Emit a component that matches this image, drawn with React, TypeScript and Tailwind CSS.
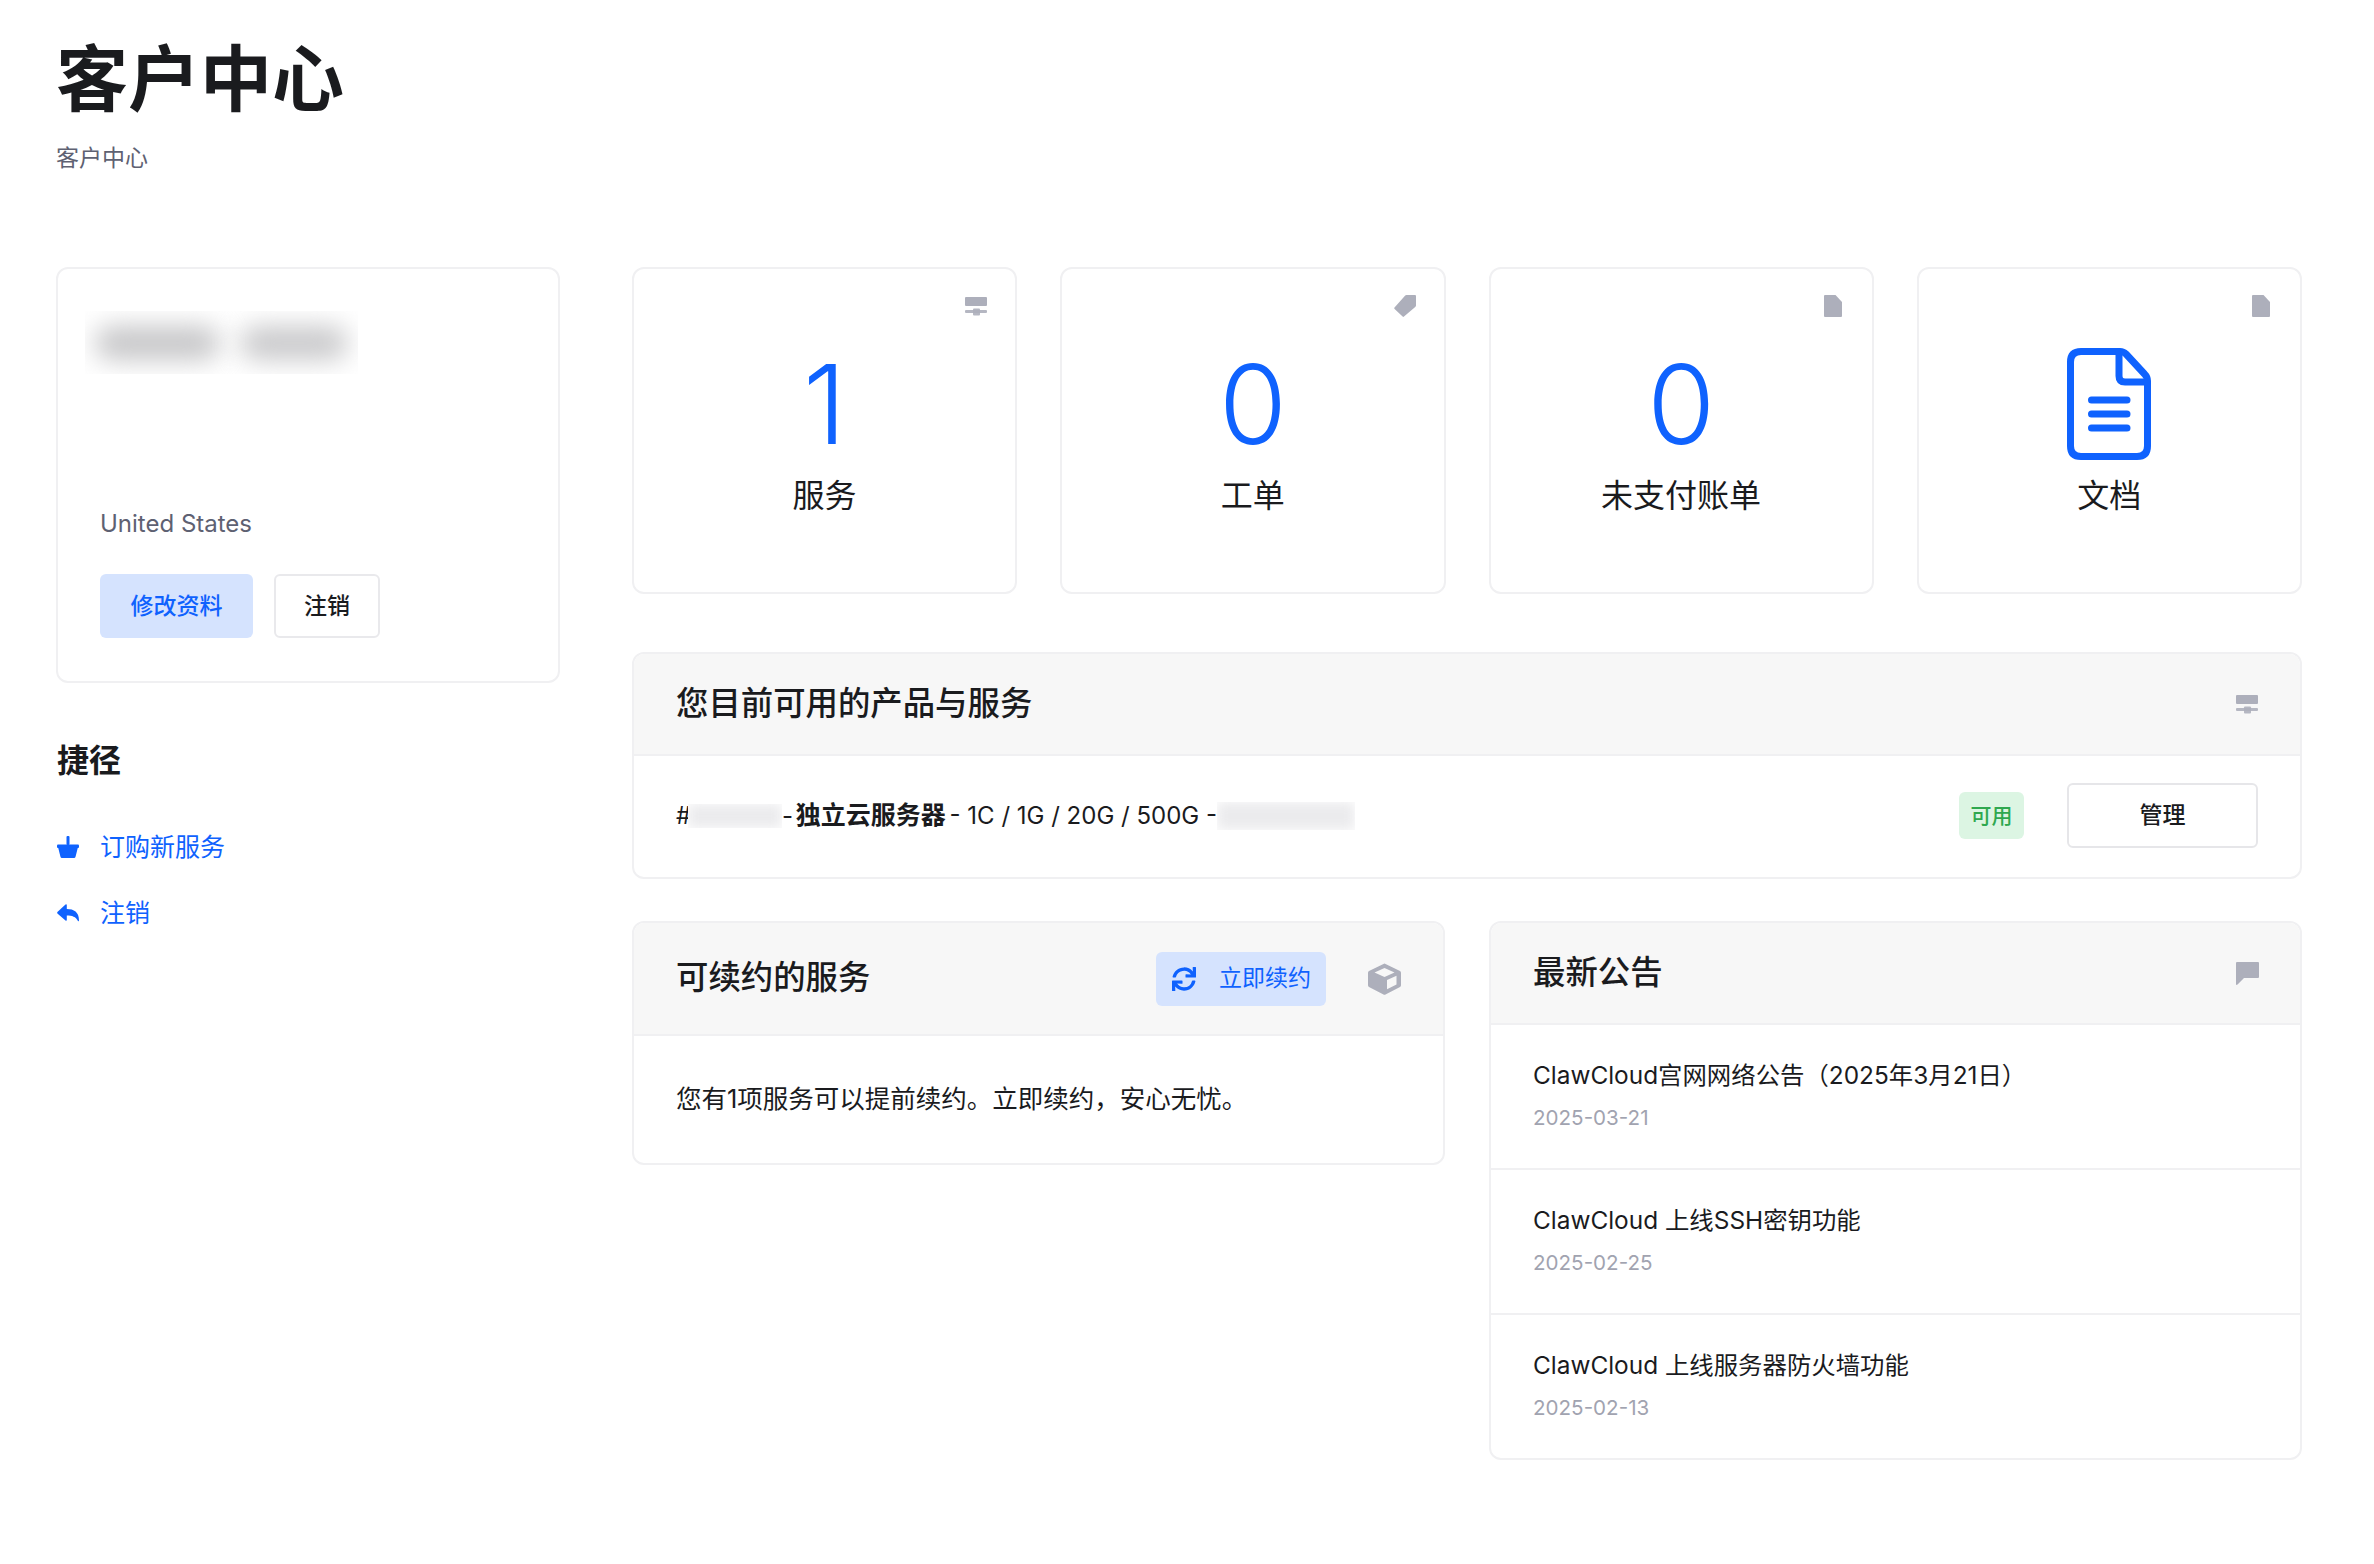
import React from "react";
import { FaSync } from "react-icons/fa";

const ServerIcon = ({ cls }: { cls: string }) => (
  <svg viewBox="0 0 22 19" className={cls} fill="#adafbb">
    <rect x="0" y="0" width="22" height="9" rx="1" />
    <rect x="0" y="13" width="22" height="3" rx="1" opacity="0.9" />
    <rect x="8" y="11.5" width="7" height="7" rx="1" opacity="0.9" />
  </svg>
);
const TagIcon = () => (
  <svg viewBox="0 0 22 22" className="w-[22px] h-[22px]" fill="#adafbb">
    <path d="M0.5 12.5 L11 0.8 Q11.5 0 12.5 0 L21 0 Q22 0 22 1 L22 10.5 Q22 11.3 21.2 12 L10 21.6 Q9.3 22.2 8.6 21.6 L0.6 14 Q0 13.3 0.5 12.5Z" />
  </svg>
);
const FileIcon = () => (
  <svg viewBox="0 0 18 22" className="w-[18px] h-[22px] mr-[2px]" fill="#adafbb">
    <path d="M1 0 H11.5 L18 7 V21 Q18 22 17 22 H1 Q0 22 0 21 V1 Q0 0 1 0Z" />
  </svg>
);
const CommentIcon = () => (
  <svg viewBox="0 0 23 23" className="w-[23px] h-[23px] -mr-[1px]" fill="#adafbb">
    <path d="M1 0 H22 Q23 0 23 1 V15 Q23 16 22 16 H8 L1.5 22.6 Q0 23.5 0 22 V1 Q0 0 1 0Z" />
  </svg>
);
const CubeIcon = () => (
  <svg viewBox="0 0 33 32" className="w-[33px] h-[32px]">
    <path d="M16.5 0.5 L32 8 Q33 8.6 33 9.8 V22.2 Q33 23.4 32 24 L17.5 31.4 Q16.5 32 15.5 31.4 L1 24 Q0 23.4 0 22.2 V9.8 Q0 8.6 1 8 Z" fill="#adafbb" />
    <path d="M16.5 5 L26.5 9.5 L16.5 14 L6.5 9.5 Z" fill="#f7f7f7" />
    <path d="M19 17 L28.5 12.8 V21.5 L19 26.2 Z" fill="#f7f7f7" />
  </svg>
);
const BasketIcon = () => (
  <svg viewBox="0 0 22 22" className="w-[22px] h-[22px] ml-[1px] mb-[2px]" fill="#0f62fe">
    <rect x="9.5" y="0" width="3" height="9" rx="1" />
    <rect x="0" y="8.5" width="22" height="3.5" rx="1" />
    <path d="M1 11 H21 L18.6 20.5 Q18.3 22 17 22 H5 Q3.7 22 3.4 20.5Z" />
  </svg>
);
const ReplyIcon = () => (
  <svg viewBox="0 0 22 18" className="w-[22px] h-[18px] ml-[1px] mb-[3px]" fill="#0f62fe">
    <path d="M0.4 8 L8.5 0.5 Q9.8 -0.2 9.8 1.2 V5 C17 5 22 8 22 16.500 Q21.800 18 20.800 16.800 C19 12.800 15 11.500 9.800 11.500 V15.800 Q9.800 17.200 8.500 16.500 L0.400 9.500 Q-0.100 8.800 0.400 8Z" />
  </svg>
);
const BigDocIcon = () => (
  <svg viewBox="0 0 84 112" className="w-[84px] h-[112px]" fill="none" stroke="#0f62fe" strokeWidth="7" strokeLinejoin="round" strokeLinecap="round">
    <path d="M14 3.5 H53 Q56.5 3.5 59 6 L77.5 26 Q80.5 29 80.5 33 V98 Q80.5 108.500 70 108.500 H14 Q3.5 108.500 3.5 98 V14 Q3.5 3.5 14 3.5Z" />
    <path d="M52 4 V28 Q52 34 58 34 H80" />
    <path d="M24.500 52 H60 M24.500 66 H60 M24.500 80 H60" />
  </svg>
);

const Blur = ({ cls }: { cls: string }) => (
  <span className={`block overflow-hidden bg-white shrink-0 ${cls}`}>
    <span className="block w-full h-full bg-[#ebebed] blur-[6px]" />
  </span>
);

const Stat = ({ icon, value, label }: { icon: React.ReactNode; value: React.ReactNode; label: string }) => (
  <div className="h-[327px] border-2 border-[#f0f0f2] rounded-[12px] pt-[26px] px-[28px]">
    <div className="flex justify-end h-[22px] items-start">{icon}</div>
    <div className="mt-[27px] h-[120px] flex items-center justify-center text-[110px] leading-none font-light text-[#0f62fe]">{value}</div>
    <div className="mt-[10px] h-[44px] leading-[44px] text-center text-[32px] text-[#1a1b1e]">{label}</div>
  </div>
);

const Panel = ({ title, right, h, children, cls }: { title: string; right: React.ReactNode; h: string; children: React.ReactNode; cls?: string }) => (
  <div className={`border-2 border-[#f0f0f2] rounded-[12px] overflow-hidden ${cls ?? ""}`}>
    <div className={`flex items-center justify-between pl-[42px] pr-[42px] bg-[#f7f7f7] border-b-2 border-[#f0f0f2] ${h}`}>
      <div className="text-[32.4px] font-medium text-[#1a1b1e]">{title}</div>
      {right}
    </div>
    {children}
  </div>
);

const News = ({ title, date, last }: { title: string; date: string; last?: boolean }) => (
  <div className={`pl-[42px] pt-[30px] ${last ? "h-[143px]" : "h-[145px] border-b-2 border-[#f0f0f2]"}`}>
    <div className="text-[24.4px] leading-[40px] text-[#1a1b1e]">{title}</div>
    <div className="mt-[3px] text-[20.6px] leading-[40px] text-[#a1a3b0]">{date}</div>
  </div>
);

export default function App() {
  return (
    <div className="w-[2374px] h-[1564px] bg-white pl-[56px] pr-[72px] pt-[29px] font-['Inter','Noto_Sans_CJK_SC',sans-serif] text-[#1a1b1e]">
      <h1 className="text-[72px] leading-[100px] font-semibold">客户中心</h1>
      <div className="mt-[13px] text-[23px] leading-[32px] text-[#5e6172]">客户中心</div>

      <div className="mt-[93px] flex gap-[72px] items-start">
        <aside className="w-[504px] shrink-0">
          <div className="h-[416px] border-2 border-[#f0f0f2] rounded-[12px] px-[42px] pt-[42px]">
            <div className="flex w-[273px] h-[63px] -ml-[15px] overflow-hidden">
              <span className="w-[145px] h-full flex items-center justify-center">
                <span className="block w-[125px] h-[34px] rounded-full bg-[#c6c6c8] blur-[13px]" />
              </span>
              <span className="w-[128px] h-full flex items-center justify-center">
                <span className="block w-[108px] h-[34px] rounded-full bg-[#c9c9cb] blur-[13px]" />
              </span>
            </div>
            <div className="mt-[133px] text-[24px] leading-[34px] text-[#5e6172]">United States</div>
            <div className="mt-[33px] flex gap-[21px]">
              <div className="w-[153px] h-[64px] rounded-[6px] bg-[#d5e3fe] text-[#0f62fe] text-[23px] font-medium flex items-center justify-center">修改资料</div>
              <div className="w-[106px] h-[64px] rounded-[6px] border-2 border-[#e9e9ec] text-[23px] font-medium flex items-center justify-center">注销</div>
            </div>
          </div>
          <div className="mt-[55px] ml-[1px] text-[32px] leading-[46px] font-semibold">捷径</div>
          <div className="mt-[42px] flex items-center gap-[21px] h-[44px] text-[25px] text-[#0f62fe]"><BasketIcon />订购新服务</div>
          <div className="mt-[22px] flex items-center gap-[21px] h-[44px] text-[25px] text-[#0f62fe]"><ReplyIcon />注销</div>
        </aside>

        <main className="w-[1670px]">
          <div className="grid grid-cols-4 gap-[43px]">
            <Stat icon={<ServerIcon cls="w-[22px] h-[19px] mt-[2px]" />} value="1" label="服务" />
            <Stat icon={<TagIcon />} value="0" label="工单" />
            <Stat icon={<FileIcon />} value="0" label="未支付账单" />
            <Stat icon={<FileIcon />} value={<BigDocIcon />} label="文档" />
          </div>

          <Panel cls="mt-[58px]" h="h-[102px]" title="您目前可用的产品与服务" right={<ServerIcon cls="w-[22px] h-[19px]" />}>
            <div className="h-[121px] pl-[42px] pr-[42px] pb-[2px] flex items-center">
              <div className="flex items-center text-[24px] text-[#1a1b1e]">
                <span className="w-[12px]">#</span>
                <Blur cls="w-[94px] h-[24px]" />
                <span className="whitespace-pre">- <span className="font-semibold text-[25px] -ml-[4px] -mr-[3px]">独立云服务器</span> - 1C / 1G / 20G / 500G -</span>
                <Blur cls="w-[138px] h-[28px]" />
              </div>
              <div className="ml-auto w-[65px] h-[47px] rounded-[6px] bg-[#dcf5e3] text-[#2fa84f] text-[21px] font-medium flex items-center justify-center">可用</div>
              <div className="ml-[43px] w-[191px] h-[65px] rounded-[6px] border-2 border-[#e6e6e9] text-[23px] font-medium flex items-center justify-center">管理</div>
            </div>
          </Panel>

          <div className="mt-[42px] grid grid-cols-[813px_1fr] gap-[44px] items-start">
            <Panel h="h-[113px]" title="可续约的服务" right={
              <div className="flex items-center gap-[42px]">
                <div className="w-[170px] h-[54px] rounded-[6px] bg-[#d5e3fe] text-[#0f62fe] text-[23px] flex items-center pl-[16px] gap-[23px]">
                  <FaSync className="w-[24px] h-[24px]" />立即续约
                </div>
                <CubeIcon />
              </div>}>
              <div className="h-[127px] pl-[42px] flex items-center text-[25.5px]">您有1项服务可以提前续约。立即续约，安心无忧。</div>
            </Panel>
            <Panel h="h-[102px]" title="最新公告" right={<CommentIcon />}>
              <News title="ClawCloud宫网网络公告（2025年3月21日）" date="2025-03-21" />
              <News title="ClawCloud 上线SSH密钥功能" date="2025-02-25" />
              <News title="ClawCloud 上线服务器防火墙功能" date="2025-02-13" last />
            </Panel>
          </div>
        </main>
      </div>
    </div>
  );
}
